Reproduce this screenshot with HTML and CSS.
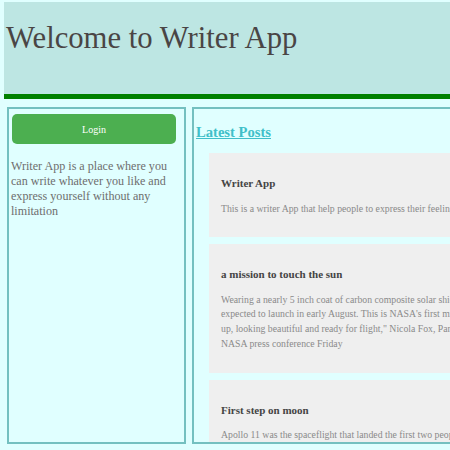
FILE: index.html
```html
<!DOCTYPE html>
<html lang="en">
<head>
<meta charset="utf-8">
<title>Writer App</title>
<link rel="stylesheet" href="styles.css">
</head>
<body>
<header class="site-header">
  <h1 class="site-title">Welcome to Writer App</h1>
</header>
<div class="layout">
  <aside class="sidebar">
    <button class="login-btn" type="button">Login</button>
    <p class="about">Writer App is a place where you can write whatever you like and express yourself without any limitation</p>
  </aside>
  <main class="main">
    <h2 class="section-title">Latest Posts</h2>
    <div class="posts">
      <article class="post">
        <h3 class="post-title">Writer App</h3>
        <p class="post-text">This is a writer App that help people to express their feelings</p>
      </article>
      <article class="post">
        <h3 class="post-title">a mission to touch the sun</h3>
        <p class="post-text">Wearing a nearly 5 inch coat of carbon composite solar shield, the Parker Solar Probe spacecraft is finally expected to launch in early August. This is NASA's first mission to touch the sun. "The spacecraft is all buttoned up, looking beautiful and ready for flight," Nicola Fox, Parker Solar Probe project scientist, explained during the NASA press conference Friday</p>
      </article>
      <article class="post">
        <h3 class="post-title">First step on moon</h3>
        <p class="post-text">Apollo 11 was the spaceflight that landed the first two people on the Moon. Commander Neil Armstrong and lunar module pilot Buzz Aldrin landed the Apollo Lunar Module Eagle on July 20, 1969.</p>
      </article>
    </div>
  </main>
</div>
</body>
</html>
```

FILE: styles.css
```css
html {
  overflow: hidden;
  background: #e0ffff;
}

body {
  margin: 0;
  font-family: "Liberation Serif", "Times New Roman", serif;
  background: #e0ffff;
}

.site-header {
  margin: 2px 0 0 4px;
  padding: 19px 0 38px 2px;
  background: #bde6e3;
  border-bottom: 5px solid #008000;
}

.site-title {
  margin: 0;
  font-size: 30.7px;
  line-height: 35px;
  font-weight: normal;
  color: #4a4545;
  white-space: nowrap;
}

.layout {
  display: flex;
  gap: 6px;
  margin: 8px 0 0 7px;
  align-items: flex-start;
}

.sidebar {
  box-sizing: border-box;
  flex: 0 0 179px;
  height: 337px;
  padding: 5px 2px;
  border: 2px solid #74c0c0;
}

.login-btn {
  display: block;
  width: 164px;
  height: 30px;
  margin-left: 1px;
  border: none;
  border-radius: 5px;
  background: #4caf50;
  color: #ffffff;
  font-family: "Liberation Serif", "Times New Roman", serif;
  font-size: 10px;
  cursor: pointer;
}

.about {
  margin: 14.5px 0 0;
  font-size: 12.1px;
  line-height: 15px;
  color: #6e6e6e;
}

.main {
  box-sizing: border-box;
  flex: 0 0 560px;
  height: 337px;
  padding: 0 2px;
  border: 2px solid #74c0c0;
  overflow: hidden;
}

.section-title {
  margin: 14.5px 0 12.5px;
  font-size: 14.6px;
  line-height: 17px;
  font-weight: bold;
  color: #3fbfc9;
  text-decoration: underline;
}

.posts {
  display: flex;
  flex-direction: column;
  gap: 7px;
  margin-left: 13px;
}

.post {
  width: 448px;
  padding: 23px 12px 21px;
  background: #efefef;
}

.post-title {
  margin: 0 0 11.5px;
  font-size: 11px;
  line-height: 14px;
  font-weight: bold;
  color: #444444;
}

.post-text {
  margin: 0;
  font-size: 9.75px;
  line-height: 14.7px;
  color: #8a8a8a;
}
```
